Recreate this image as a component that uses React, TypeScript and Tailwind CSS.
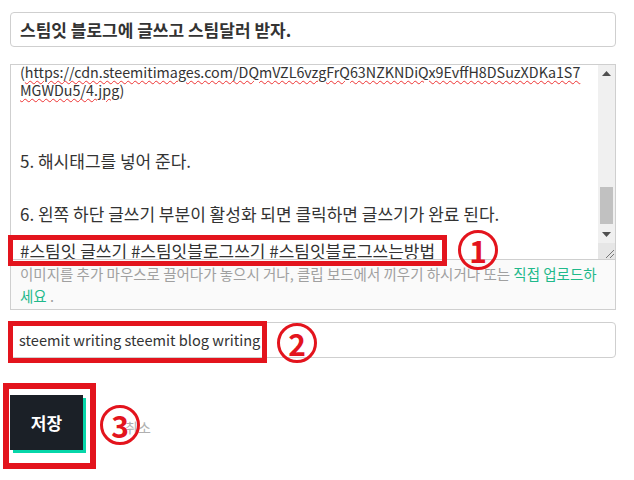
import React from "react";

const RED = "border-[#e3141d]";

function Circled({ n, left, top }: { n: string; left: number; top: number }) {
  return (
    <div
      className="absolute w-[40px] h-[40px] rounded-full border-[3px] border-[#e3141d] flex items-center justify-center text-[#e3141d] font-bold text-[30px] leading-none"
      style={{ left, top }}
    >
      <span className="-mt-[1px]">{n}</span>
    </div>
  );
}

export default function App() {
  const wavy = "underline decoration-wavy decoration-[#e33] decoration-[1px] underline-offset-[2px]";
  return (
    <div
      className="w-[634px] h-[480px] bg-white relative overflow-hidden text-[#333]"
      style={{ fontFamily: '"Noto Sans CJK KR", "Noto Sans", sans-serif' }}
    >
      <div className="pl-[10px] pr-[18px] pt-[12px]">
        {/* title */}
        <div className="h-[35px] border border-[#cfcfcf] rounded-[4px] flex items-center px-[9px] text-[17px] font-bold bg-white">
          스팀잇 블로그에 글쓰고 스팀달러 받자.
        </div>

        {/* textarea */}
        <div className="mt-[17px] h-[196px] border border-[#cfcfcf] flex overflow-hidden">
          <div className="flex-1 pl-[9px] overflow-hidden text-[17px] leading-[17.8px]">
            <div className="-mt-[2px]">
              <div className="whitespace-nowrap text-[14.3px]">
                <span>(</span>
                <span className={wavy}>https://cdn.steemitimages.com/DQmVZL6vzgFrQ63NZKNDiQx9EvffH8DSuzXDKa1S7</span>
              </div>
              <div className="text-[14.3px]">
                <span className={wavy}>MGWDu5/4.jpg</span>)
              </div>
              <div className="h-[17.8px]" />
              <div className="h-[17.8px]" />
              <div className="h-[17.8px]" />
              <div>5. 해시태그를 넣어 준다.</div>
              <div className="h-[17.8px]" />
              <div className="h-[17.8px]" />
              <div>6. 왼쪽 하단 글쓰기 부분이 활성화 되면 클릭하면 글쓰기가 완료 된다.</div>
              <div className="h-[17.8px]" />
              <div className="mt-[1px]">#스팀잇 글쓰기 #스팀잇블로그쓰기 #스팀잇블로그쓰는방법</div>
            </div>
          </div>
          {/* scrollbar */}
          <div className="w-[17px] bg-[#f0f0f0] flex flex-col">
            <div className="h-[17px] flex items-center justify-center">
              <svg width="9" height="5" viewBox="0 0 9 5"><polygon points="0,5 9,5 4.5,0" fill="#505050" /></svg>
            </div>
            <div className="flex-1 flex flex-col justify-end pb-[2px]">
              <div className="h-[37px] mx-[2px] bg-[#c1c1c1]" />
            </div>
            <div className="h-[17px] flex items-center justify-center">
              <svg width="9" height="5" viewBox="0 0 9 5"><polygon points="0,0 9,0 4.5,5" fill="#505050" /></svg>
            </div>
            <div className="h-[16px] bg-[#e6e6e6] flex items-end justify-end">
              <svg width="12" height="12" viewBox="0 0 12 12">
                <line x1="11" y1="3" x2="3" y2="11" stroke="#777" strokeWidth="1" />
                <line x1="11" y1="7" x2="7" y2="11" stroke="#777" strokeWidth="1" />
              </svg>
            </div>
          </div>
        </div>

        {/* helper */}
        <div className="h-[50px] border border-t-0 border-[#cfcfcf] bg-[#fafafa] pl-[9px] pt-[3px] text-[14.5px] leading-[22px] text-[#a0a0a0]">
          <div className="whitespace-nowrap">
            이미지를 추가 마우스로 끌어다가 놓으시 거나, 클립 보드에서 끼우기 하시거나 또는{" "}
            <span className="text-[#1fb98b]">직접 업로드하</span>
          </div>
          <div>
            <span className="text-[#1fb98b]">세요</span> .
          </div>
        </div>

        {/* tags */}
        <div className="mt-[12px] h-[36px] border border-[#cfcfcf] rounded-[4px] flex items-center px-[8px] text-[14.6px] bg-white">
          steemit writing steemit blog writing
        </div>

        {/* buttons */}
        <div className="mt-[37px] flex items-center">
          <div className="w-[73px] h-[55px] bg-[#1b2027] shadow-[3px_3px_0_#06d6a9] flex items-center justify-center text-white font-bold text-[17px]">
            저장
          </div>
          <div className="ml-[42px] mt-[10px] text-[14px] text-[#b0b0b0]">취소</div>
        </div>
      </div>

      {/* annotations */}
      <div className={`absolute left-[8px] top-[235px] w-[439px] h-[31px] border-[5px] ${RED}`} />
      <Circled n="1" left={458} top={230} />
      <div className={`absolute left-[8px] top-[321px] w-[259px] h-[42px] border-[5px] ${RED}`} />
      <Circled n="2" left={277} top={323} />
      <div className={`absolute left-[3px] top-[383px] w-[93px] h-[86px] border-[6px] ${RED}`} />
      <Circled n="3" left={100} top={405} />
    </div>
  );
}
